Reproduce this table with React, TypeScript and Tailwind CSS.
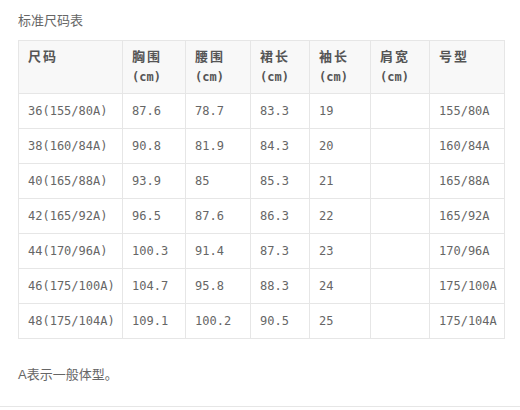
const headers: [string, string?][] = [
  ['尺码'],
  ['胸围', '(cm)'],
  ['腰围', '(cm)'],
  ['裙长', '(cm)'],
  ['袖长', '(cm)'],
  ['肩宽', '(cm)'],
  ['号型'],
]

const widths = ['w-[104px]', 'w-[63px]', 'w-[65px]', 'w-[59px]', 'w-[61px]', 'w-[59px]', 'w-[75px]']

const rows = [
  ['36(155/80A)', '87.6', '78.7', '83.3', '19', '', '155/80A'],
  ['38(160/84A)', '90.8', '81.9', '84.3', '20', '', '160/84A'],
  ['40(165/88A)', '93.9', '85', '85.3', '21', '', '165/88A'],
  ['42(165/92A)', '96.5', '87.6', '86.3', '22', '', '165/92A'],
  ['44(170/96A)', '100.3', '91.4', '87.3', '23', '', '170/96A'],
  ['46(175/100A)', '104.7', '95.8', '88.3', '24', '', '175/100A'],
  ['48(175/104A)', '109.1', '100.2', '90.5', '25', '', '175/104A'],
]

export default function App() {
  return (
    <div className="w-[520px] h-[410px] bg-white overflow-hidden flex flex-col">
      <p className="pl-[18px] pt-[11px] text-[13px] leading-[20px] text-[#666] font-['Liberation_Sans','Noto_Sans_CJK_SC',sans-serif]">
        标准尺码表
      </p>

      {/* Size table */}
      <table className="ml-[18px] mt-[9px] w-[486px] table-fixed border-collapse text-[12px] leading-[21px] text-[#666] font-['DejaVu_Sans_Mono','Noto_Sans_CJK_SC',monospace]">
        <thead>
          <tr className="bg-[#f8f8f8]">
            {headers.map(([label, unit], i) => (
              <th
                key={i}
                className={`${widths[i]} h-[53px] align-top border border-[#e6e6e6] pl-[9px] pt-[5px] text-left font-bold text-[#555]`}
              >
                <div className="tracking-[2px] text-[13px]">{label}</div>
                {unit && <div>{unit}</div>}
              </th>
            ))}
          </tr>
        </thead>
        <tbody>
          {rows.map((row, r) => (
            <tr key={r}>
              {row.map((cell, c) => (
                <td key={c} className="h-[35px] border border-[#e6e6e6] pl-[9px] align-middle">
                  {cell}
                </td>
              ))}
            </tr>
          ))}
        </tbody>
      </table>

      <p className="pl-[18px] mt-[26px] text-[13px] leading-[20px] text-[#666] font-['Liberation_Sans','Noto_Sans_CJK_SC',sans-serif]">
        A表示一般体型。
      </p>

      <div className="mt-auto mb-[3px] h-px bg-[#e6e6e6]" />
    </div>
  )
}
